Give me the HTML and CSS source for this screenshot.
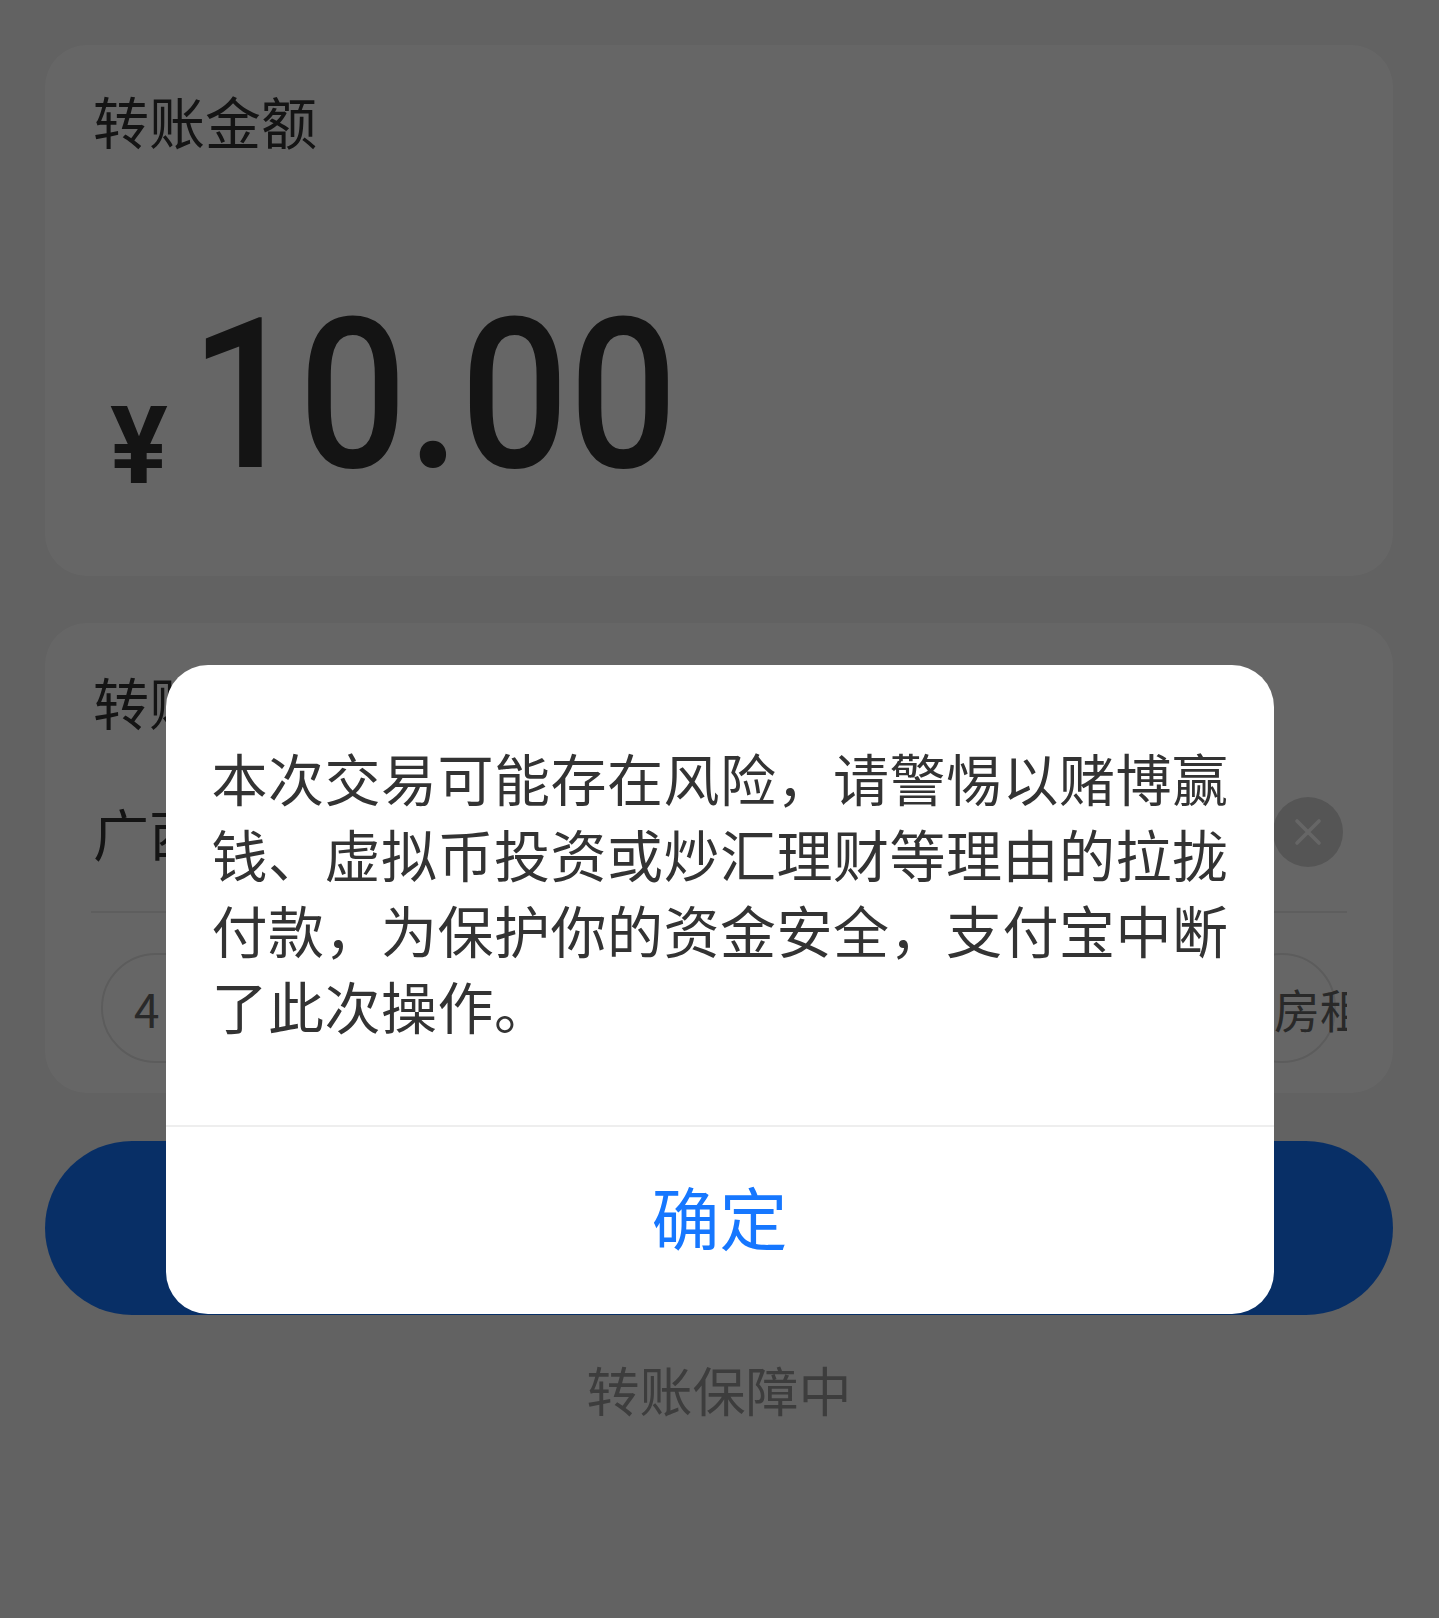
FILE: index.html
```html
<!DOCTYPE html>
<html lang="zh-CN">
<head>
<meta charset="utf-8">
<title>转账</title>
<link rel="stylesheet" href="styles.css">
</head>
<body>
<main class="page">
  <section class="card amount-card">
    <div class="card-label">转账金额</div>
    <div class="amount"><span class="currency">¥</span><span class="amount-value">10.00</span></div>
  </section>

  <section class="card note-card">
    <div class="card-label">转账备注</div>
    <div class="note-input">
      <span class="note-text">广西房租</span>
      <span class="clear-btn">
        <svg viewBox="0 0 30 30" width="30" height="30"><path d="M4 4 L26 26 M26 4 L4 26" stroke="#fff" stroke-width="3.6" stroke-linecap="round" fill="none"/></svg>
      </span>
    </div>
    <div class="note-divider"></div>
    <div class="chips">
      <span class="chip chip-first">4月生活费</span>
      <span class="chip">还你的钱</span>
      <span class="chip chip-last">房租</span>
    </div>
  </section>

  <button class="primary-btn" type="button">确认转账</button>
  <div class="guarantee">转账保障中</div>
</main>

<div class="mask">
  <div class="dialog">
    <p class="dialog-text">本次交易可能存在风险，请警惕以赌博赢钱、虚拟币投资或炒汇理财等理由的拉拢付款，为保护你的资金安全，支付宝中断了此次操作。</p>
    <div class="dialog-actions">
      <button class="dialog-ok" type="button">确定</button>
    </div>
  </div>
</div>
</body>
</html>
```

FILE: styles.css
```css
* {
  box-sizing: border-box;
}

html, body {
  margin: 0;
  padding: 0;
}

body {
  background: #f5f5f5;
  font-family: "Noto Sans CJK SC", "Noto Sans", sans-serif;
  color: #333;
  min-height: 1618px;
}

.page {
  padding: 45px 46px 0 45px;
  display: flex;
  flex-direction: column;
}

.card {
  background: #fff;
  border-radius: 42px;
  padding: 47px 46px 0 48px;
}

.card-label {
  font-size: 56px;
  line-height: 1;
  color: #333;
}

.amount-card {
  height: 531px;
}

.amount {
  margin-top: 142px;
  font-family: Roboto, "Liberation Sans", sans-serif;
  font-size: 210px;
  line-height: 1;
  color: #333;
  white-space: nowrap;
}

.currency {
  font-size: 108px;
  font-weight: 700;
  vertical-align: -16px;
  margin-left: 17px;
  margin-right: 22px;
}

.amount-value {
  display: inline-block;
  font-weight: 500;
  letter-spacing: 0;
  transform: scaleX(0.91);
  transform-origin: left center;
}

.note-card {
  margin-top: 47px;
  height: 470px;
  padding-top: 50px;
}

.note-input {
  margin-top: 68px;
  height: 70px;
  display: flex;
  align-items: center;
}

.note-text {
  font-size: 56px;
  line-height: 1;
  color: #333;
}

.clear-btn {
  margin-left: auto;
  margin-right: 4px;
  width: 70px;
  height: 70px;
  border-radius: 50%;
  background: #d4d4d4;
  display: flex;
  align-items: center;
  justify-content: center;
}

.note-divider {
  margin-top: 44px;
  margin-left: -2px;
  height: 2px;
  background: #eaeaea;
}

.chips {
  margin-top: 40px;
  padding-left: 8px;
  display: flex;
  justify-content: space-between;
  overflow: hidden;
}

.chip {
  height: 110px;
  border-radius: 55px;
  border: 2px solid #e6e6e6;
  padding: 0 28px;
  display: flex;
  align-items: center;
  font-size: 46px;
  line-height: 1;
  color: #666;
  white-space: nowrap;
}

.chip-first {
  padding-left: 31px;
  letter-spacing: 9px;
}

.chip-last {
  flex: 0 0 108px;
  width: 108px;
  min-width: 0;
  padding: 0 0 0 44px;
  margin-right: 11px;
}

.primary-btn {
  margin-top: 48px;
  height: 174px;
  border: none;
  border-radius: 87px;
  background: #1677ff;
  color: #fff;
  font-family: inherit;
  font-size: 60px;
}

.guarantee {
  margin-top: 48px;
  text-align: center;
  font-size: 53px;
  line-height: 1;
  color: #999;
}

.mask {
  position: fixed;
  inset: 0;
  background: rgba(0, 0, 0, 0.6);
  display: flex;
  justify-content: center;
  align-items: flex-start;
  padding-top: 665px;
}

.dialog {
  width: 1108px;
  background: #fff;
  border-radius: 42px;
  overflow: hidden;
}

.dialog-text {
  margin: 0;
  padding: 74px 44px 82px 46px;
  font-size: 56px;
  letter-spacing: 0.5px;
  line-height: 76px;
  color: #333;
}

.dialog-actions {
  border-top: 2px solid #eeeeee;
  height: 189px;
  padding-bottom: 10px;
  display: flex;
  align-items: center;
  justify-content: center;
}

.dialog-ok {
  border: none;
  background: none;
  padding: 0;
  font-family: inherit;
  font-size: 68px;
  line-height: 1;
  color: #1677ff;
}
```
